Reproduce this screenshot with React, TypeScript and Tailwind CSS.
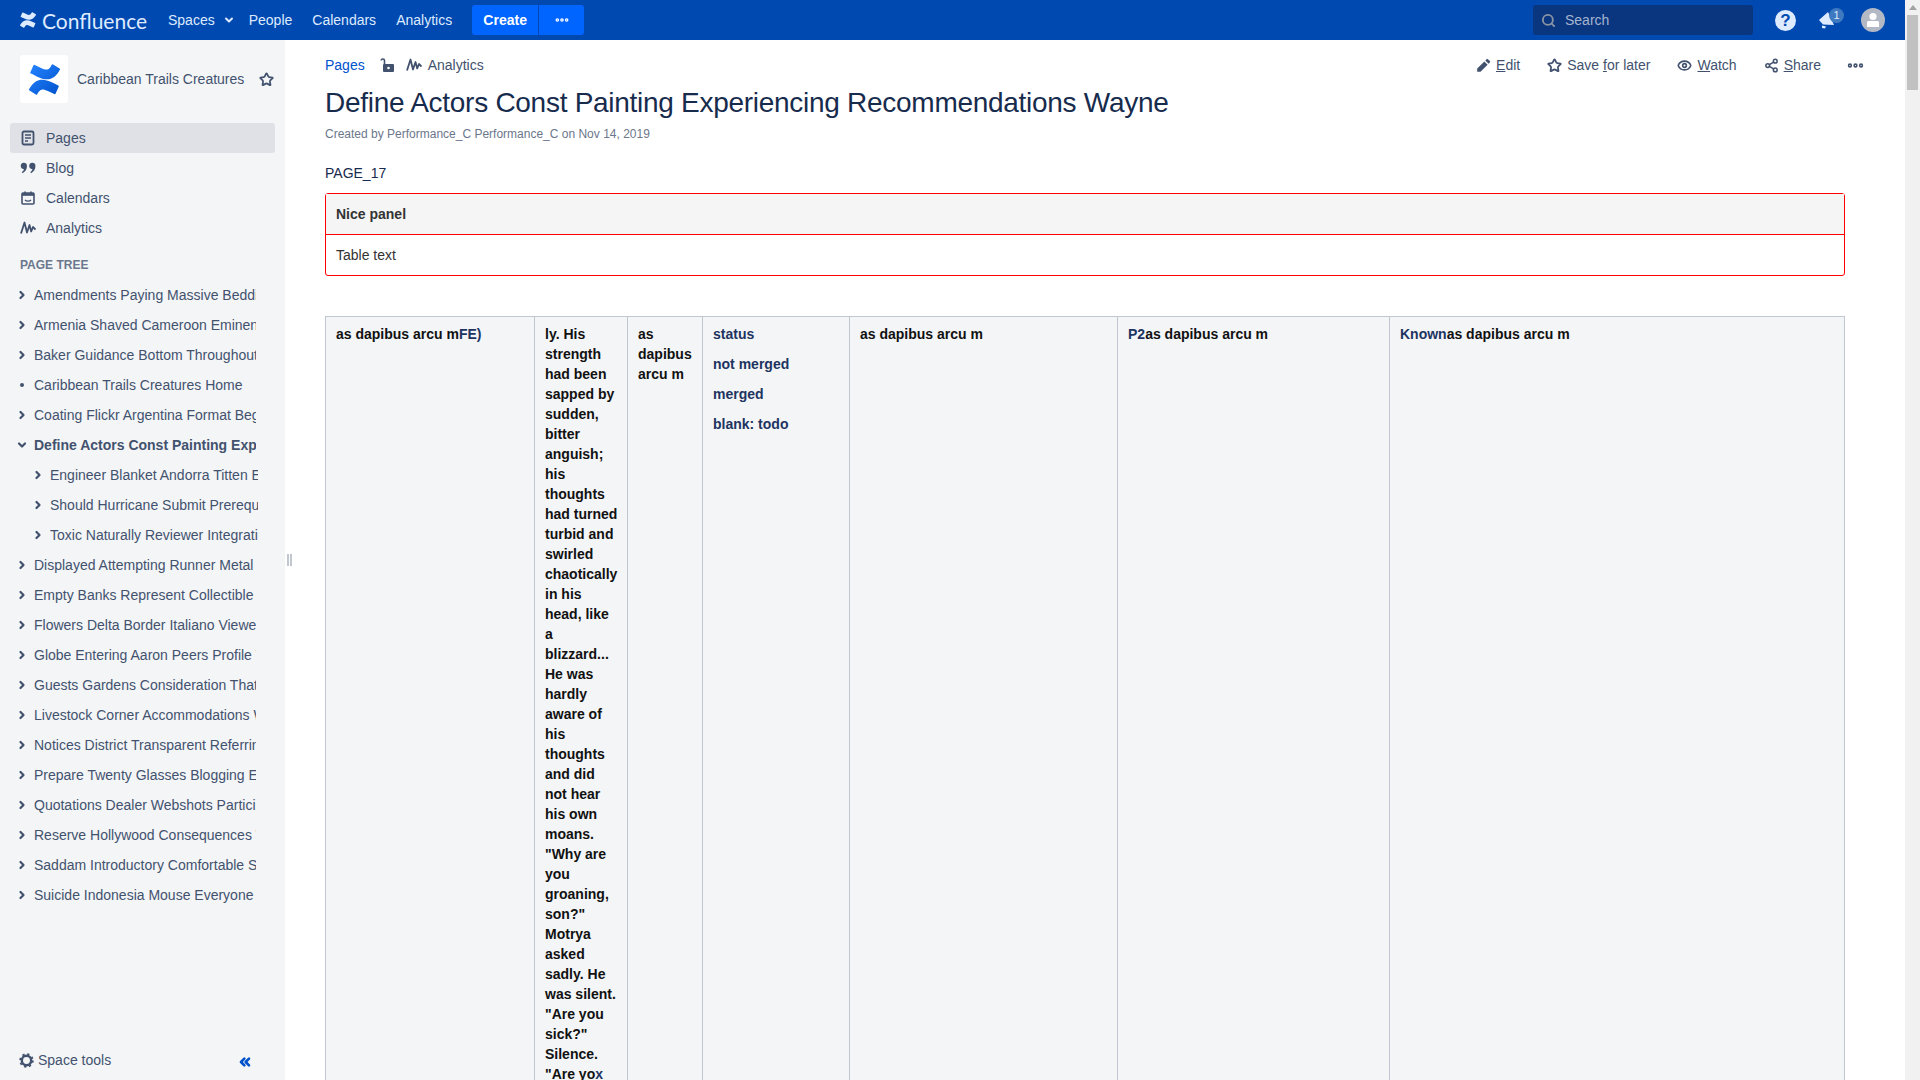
import { ChevronDown, ChevronRight, ChevronsLeft, Eye, MoreHorizontal, Search, Share2, Star } from "lucide-react";
import type { ReactNode } from "react";

const LOGO_PATH =
  "M.87 18.257c-.248.382-.53.875-.763 1.245a.764.764 0 0 0 .255 1.04l4.965 3.054a.764.764 0 0 0 1.058-.26c.199-.332.454-.763.733-1.221 1.967-3.247 3.945-2.853 7.508-1.146l4.957 2.337a.764.764 0 0 0 1.028-.382l2.364-5.346a.764.764 0 0 0-.382-1 599.851 599.851 0 0 1-4.965-2.361C10.911 10.97 5.224 11.185.87 18.257zM23.131 5.743c.249-.405.531-.875.764-1.25a.764.764 0 0 0-.256-1.034L18.675.404a.764.764 0 0 0-1.058.26c-.195.335-.451.763-.734 1.225-1.966 3.246-3.945 2.85-7.508 1.146L4.437.7a.764.764 0 0 0-1.027.382L1.046 6.428a.764.764 0 0 0 .382 1c1.039.49 3.105 1.467 4.965 2.361 6.698 3.246 12.384 3.029 16.738-4.046z";

const treeItems = [
  { label: "Amendments Paying Massive Bedding Wayne" },
  { label: "Armenia Shaved Cameroon Eminent Wayne" },
  { label: "Baker Guidance Bottom Throughout Wayne" },
  { label: "Caribbean Trails Creatures Home", leaf: true },
  { label: "Coating Flickr Argentina Format Begin Wayne" },
  { label: "Define Actors Const Painting Experiencing", open: true },
  { label: "Engineer Blanket Andorra Titten Experience", child: true },
  { label: "Should Hurricane Submit Prerequisite", child: true },
  { label: "Toxic Naturally Reviewer Integration", child: true },
  { label: "Displayed Attempting Runner Metal Wayne" },
  { label: "Empty Banks Represent Collectible Wayne" },
  { label: "Flowers Delta Border Italiano Viewer Wayne" },
  { label: "Globe Entering Aaron Peers Profile Wayne" },
  { label: "Guests Gardens Consideration That Wayne" },
  { label: "Livestock Corner Accommodations Wayne" },
  { label: "Notices District Transparent Referring" },
  { label: "Prepare Twenty Glasses Blogging Event" },
  { label: "Quotations Dealer Webshots Participate" },
  { label: "Reserve Hollywood Consequences Wayne" },
  { label: "Saddam Introductory Comfortable Search" },
  { label: "Suicide Indonesia Mouse Everyone Wayne" },
];

function ConfluenceLogo({ className, gradient }: { className: string; gradient?: boolean }) {
  return (
    <svg viewBox="0 0 24 24" className={className} fill={gradient ? "url(#logoBlue)" : "currentColor"}>
      {gradient && (
        <defs>
          <linearGradient id="logoBlue" x1="0" y1="0" x2="1" y2="1">
            <stop offset="0" stopColor="#2684FF" />
            <stop offset="1" stopColor="#0052CC" />
          </linearGradient>
        </defs>
      )}
      <path d={LOGO_PATH} />
    </svg>
  );
}

function PagesIcon() {
  return (
    <svg viewBox="0 0 16 16" className="h-4 w-4" fill="none" stroke="#42526E">
      <rect x="2.5" y="1.5" width="11" height="13" rx="1.5" strokeWidth="1.8" />
      <path d="M5 5h6M5 8h6M5 11h3" strokeWidth="1.5" />
    </svg>
  );
}

function BlogIcon() {
  return (
    <svg viewBox="0 0 17 16" className="h-4 w-[17px]" fill="#42526E">
      <path d="M4 2.500a3.400 3.400 0 0 1 3.400 3.400c0 3.500-1.600 6-4.600 7.600l-.9-1.200c1.300-.9 2.100-1.900 2.400-3.100A3.350 3.350 0 1 1 4 2.500z" />
      <path d="M13 2.500a3.400 3.400 0 0 1 3.400 3.400c0 3.500-1.600 6-4.600 7.600l-.9-1.200c1.300-.9 2.100-1.900 2.400-3.100A3.350 3.350 0 1 1 13 2.500z" />
    </svg>
  );
}

function CalendarIcon() {
  return (
    <svg viewBox="0 0 16 16" className="h-4 w-4" fill="none" stroke="#42526E">
      <rect x="2" y="3" width="12" height="11" rx="1" strokeWidth="1.6" />
      <path d="M2 4.500h12" strokeWidth="2.600" />
      <path d="M5 1.500v2M11 1.500v2" strokeWidth="1.600" />
      <path d="M5 10c1.500 1.500 4.500 1.500 6 0" strokeWidth="1.400" />
    </svg>
  );
}

function AnalyticsIcon() {
  return (
    <svg viewBox="0 0 16 16" className="h-4 w-4 shrink-0" fill="none" stroke="#42526E" strokeWidth="1.800" strokeLinejoin="round">
      <path d="M1 13.500 4.500 2.500 7 12.500 9.500 5l1.700 6.500L13 7l2.500 2.500" />
    </svg>
  );
}

function LockIcon() {
  return (
    <svg viewBox="0 0 16 16" className="h-4 w-4" fill="#42526E">
      <rect x="3" y="7" width="11" height="8" rx="1" />
      <circle cx="8.500" cy="11" r="1.300" fill="#fff" />
      <path d="M4.500 7V3.600C4.500 2.500 3.700 2 2.800 2S1.200 2.500 1.200 3.400" fill="none" stroke="#42526E" strokeWidth="1.600" />
    </svg>
  );
}

function PencilIcon() {
  return (
    <svg viewBox="0 0 16 16" className="h-[15px] w-[15px]" fill="#42526E">
      <path d="M11.300 1.200a1 1 0 0 1 1.400 0l2.100 2.100a1 1 0 0 1 0 1.400l-1.400 1.400-3.500-3.500zM8.900 3.600l3.500 3.500-7.600 7.600H1.300v-3.500z" />
    </svg>
  );
}

function GearIcon() {
  return (
    <svg viewBox="0 0 16 16" className="h-[15px] w-[15px]" fill="none" stroke="#42526E">
      <circle cx="8" cy="8" r="5" strokeWidth="2.600" />
      <circle cx="8" cy="8" r="6.800" strokeWidth="1.800" strokeDasharray="2.400 2.940" />
    </svg>
  );
}

function MegaphoneIcon() {
  return (
    <svg viewBox="0 0 20 20" className="h-5 w-5" fill="#DEEBFF">
      <path d="M3 10 12 2l6 13-11-.500z" />
      <path d="M6 15.500l4 1-1 2-3-.500z" />
    </svg>
  );
}

function AvatarIcon() {
  return (
    <svg viewBox="0 0 24 24" className="h-6 w-6">
      <circle cx="12" cy="12" r="12" fill="#B3B9C4" />
      <circle cx="12" cy="8.500" r="3.600" fill="#fff" />
      <path d="M6 14.500c0-.8.700-1.500 1.500-1.500h9c.8 0 1.500.7 1.500 1.500V19H6z" fill="#fff" />
    </svg>
  );
}

function HelpIcon() {
  return (
    <div className="flex h-[21px] w-[21px] items-center justify-center rounded-full bg-[#DEEBFF] text-[17px] leading-none font-bold text-[#0049B0]">
      ?
    </div>
  );
}

function SideLink({ icon, label, active }: { icon: ReactNode; label: string; active?: boolean }) {
  return (
    <div className={`mx-[10px] flex h-[30px] items-center gap-[10px] rounded-[3px] pl-[10px] text-[14px] text-[#42526E] ${active ? "bg-[#DFE1E6]" : ""}`}>
      <span className="flex w-[16px] items-center justify-center">{icon}</span>
      {label}
    </div>
  );
}

function TreeRow({ label, leaf, open, child }: { label: string; leaf?: boolean; open?: boolean; child?: boolean }) {
  return (
    <div className={`flex h-[30px] items-center text-[14px] text-[#42526E] ${child ? "pl-[32px]" : "pl-[16px]"} ${open ? "font-bold" : ""}`}>
      <span className="flex w-[12px] items-center justify-center">
        {leaf ? (
          <span className="h-[4px] w-[4px] rounded-full bg-[#42526E]" />
        ) : open ? (
          <ChevronDown size={12} strokeWidth={4.5} />
        ) : (
          <ChevronRight size={12} strokeWidth={4.5} />
        )}
      </span>
      <span className={`ml-[6px] overflow-hidden whitespace-nowrap ${child ? "w-[208px]" : "w-[222px]"}`}>{label}</span>
    </div>
  );
}

function PageAction({ icon, children }: { icon: ReactNode; children: ReactNode }) {
  return (
    <span className="flex items-center gap-[5px] text-[14px] text-[#42526E]">
      <span className="flex w-[15px] items-center justify-center">{icon}</span>
      <span>{children}</span>
    </span>
  );
}

function TopBar() {
  return (
    <header className="flex h-[40px] shrink-0 items-center bg-[#0049B0] pl-[20px] text-[14px] text-[#DEEBFF]">
      <ConfluenceLogo className="h-[16px] w-[16px] text-[#DEEBFF]" />
      <span className="ml-[6px] w-[109px] font-['Lato',sans-serif] text-[21px] leading-none font-normal">Confluence</span>
      <span className="ml-[17px] flex items-center gap-[8px]">
        Spaces <ChevronDown size={12} strokeWidth={4} />
      </span>
      <span className="ml-[14px]">People</span>
      <span className="ml-[20px]">Calendars</span>
      <span className="ml-[20px]">Analytics</span>
      <div className="ml-[20px] flex h-[30px] gap-[1px] text-white">
        <span className="flex w-[66px] items-center justify-center rounded-l-[3px] bg-[#0065FF] font-bold">Create</span>
        <span className="flex w-[45px] items-center justify-center rounded-r-[3px] bg-[#0065FF]">
          <MoreHorizontal size={16} strokeWidth={3.5} />
        </span>
      </div>
      <div className="ml-auto flex h-[30px] w-[220px] items-center rounded-[3px] bg-[#09367F] pl-[8px] text-[#A5B4CF]">
        <Search size={15} strokeWidth={3} className="text-[#8993A4]" />
        <span className="ml-[9px]">Search</span>
      </div>
      <div className="ml-[22px] flex w-[21px] justify-center">
        <HelpIcon />
      </div>
      <div className="relative ml-[20px] flex w-[20px] justify-center">
        <MegaphoneIcon />
        <span className="absolute top-[-2px] right-[-8px] flex h-[15px] w-[15px] items-center justify-center rounded-full bg-[#3F7AC0] text-[11px] text-[#DEEBFF]">1</span>
      </div>
      <div className="mr-[20px] ml-[25px]">
        <AvatarIcon />
      </div>
    </header>
  );
}

function Sidebar() {
  return (
    <aside className="relative flex w-[285px] shrink-0 flex-col bg-[#F4F5F7]">
      <div className="flex items-center pt-[15px] pl-[20px]">
        <div className="flex h-[48px] w-[48px] items-center justify-center rounded-[3px] bg-white">
          <ConfluenceLogo className="h-[31px] w-[31px]" gradient />
        </div>
        <span className="ml-[9px] text-[14px] text-[#42526E]">Caribbean Trails Creatures</span>
        <Star size={15} strokeWidth={2.8} className="ml-[15px] text-[#42526E]" />
      </div>
      <nav className="mt-[20px]">
        <SideLink icon={<PagesIcon />} label="Pages" active />
        <SideLink icon={<BlogIcon />} label="Blog" />
        <SideLink icon={<CalendarIcon />} label="Calendars" />
        <SideLink icon={<AnalyticsIcon />} label="Analytics" />
      </nav>
      <div className="mt-[14px] pl-[20px] text-[12px] leading-[16px] font-bold text-[#6B778C]">PAGE TREE</div>
      <div className="mt-[7px]">
        {treeItems.map((item) => (
          <TreeRow key={item.label} {...item} />
        ))}
      </div>
      <div className="mt-auto flex h-[40px] items-center pr-[32px] pl-[19px] text-[14px] text-[#42526E]">
        <GearIcon />
        <span className="ml-[4px]">Space tools</span>
        <ChevronsLeft size={16} strokeWidth={4} className="mt-[4px] ml-auto text-[#0052CC]" />
      </div>
      {/* resize grip */}
      <div className="absolute top-[514px] right-[-7px] flex gap-[1px]">
        <span className="h-[12px] w-[2px] bg-[#C1C7D0]" />
        <span className="h-[12px] w-[2px] bg-[#C1C7D0]" />
      </div>
    </aside>
  );
}

function Cell({ children, tight }: { children: ReactNode; tight?: boolean }) {
  return (
    <td className={`border border-[#C1C7D0] bg-[#F4F5F7] py-[7px] pl-[10px] align-top text-[14px] leading-[20px] font-bold text-[#111] ${tight ? "pr-[7px]" : "pr-[10px]"}`}>
      {children}
    </td>
  );
}

function Content() {
  return (
    <main className="min-w-0 flex-1 overflow-hidden pt-[15px] pr-[60px] pl-[40px]">
      <div className="flex h-[20px] items-center text-[14px]">
        <span className="text-[#0052CC]">Pages</span>
        <span className="ml-[15px]">
          <LockIcon />
        </span>
        <span className="ml-[10px] flex items-center gap-[6px] text-[#42526E]">
          <AnalyticsIcon /> Analytics
        </span>
        <div className="-mr-[20px] ml-auto flex items-center">
          <PageAction icon={<PencilIcon />}>
            <u>E</u>dit
          </PageAction>
          <span className="ml-[27px]">
            <PageAction icon={<Star size={15} strokeWidth={2.8} />}>
              Save <u>f</u>or later
            </PageAction>
          </span>
          <span className="ml-[27px]">
            <PageAction icon={<Eye size={15} strokeWidth={2.6} />}>
              <u>W</u>atch
            </PageAction>
          </span>
          <span className="ml-[27px]">
            <PageAction icon={<Share2 size={17} strokeWidth={2.4} />}>
              <u>S</u>hare
            </PageAction>
          </span>
          <MoreHorizontal size={19} strokeWidth={3.5} className="ml-[25px] text-[#42526E]" />
        </div>
      </div>
      <h1 className="mt-[12px] text-[28px] leading-[32px] font-normal tracking-[-0.01em] text-[#172B4D]">Define Actors Const Painting Experiencing Recommendations Wayne</h1>
      <p className="mt-[7px] text-[12px] leading-[16px] text-[#6B778C]">Created by Performance_C Performance_C on Nov 14, 2019</p>
      <p className="mt-[21px] text-[14px] leading-[20px] text-[#172B4D]">PAGE_17</p>

      <div className="mt-[10px] rounded-[3px] border border-[#FF0000] text-[14px] text-[#333]">
        <div className="flex h-[41px] items-center border-b border-[#FF0000] bg-[#F5F5F5] pl-[10px] font-bold">Nice panel</div>
        <div className="flex h-[40px] items-center pl-[10px]">Table text</div>
      </div>

      <table className="mt-[40px] w-[1519px] table-fixed border-collapse">
        <colgroup>
          <col className="w-[209px]" />
          <col className="w-[93px]" />
          <col className="w-[75px]" />
          <col className="w-[147px]" />
          <col className="w-[268px]" />
          <col className="w-[272px]" />
          <col className="w-[455px]" />
        </colgroup>
        <tbody>
          <tr>
            <Cell>
              as dapibus arcu m<span className="text-[#1D3461]">FE)</span>
            </Cell>
            <Cell tight>
              ly. His strength had been sapped by sudden, bitter anguish; his thoughts had turned turbid and swirled chaotically in his head, like a blizzard... He was hardly aware of his thoughts and did not hear his own moans. "Why are you groaning, son?" Motrya asked sadly. He was silent. "Are you sick?" Silence. "Are yo<span className="text-[#1D3461]">x</span>
            </Cell>
            <Cell>as dapibus arcu m</Cell>
            <Cell>
              <div className="space-y-[10px] text-[#1D3461]">
                <p>status</p>
                <p>not merged</p>
                <p>merged</p>
                <p>blank: todo</p>
              </div>
            </Cell>
            <Cell>as dapibus arcu m</Cell>
            <Cell>
              <span className="text-[#1D3461]">P2</span>as dapibus arcu m
            </Cell>
            <Cell>
              <span className="text-[#1D3461]">Known</span>as dapibus arcu m
            </Cell>
          </tr>
        </tbody>
      </table>
    </main>
  );
}

function ScrollBar() {
  return (
    <div className="flex w-[15px] shrink-0 flex-col items-center bg-[#F1F1F1]">
      <div className="mt-[5px] h-0 w-0 border-x-[4px] border-b-[5px] border-x-transparent border-b-[#A3A3A3]" />
      <div className="mt-[5px] h-[75px] w-[11px] bg-[#C1C1C1]" />
    </div>
  );
}

export default function App() {
  return (
    <div className="flex h-screen w-full overflow-hidden bg-white font-['Liberation_Sans',Arial,sans-serif]">
      <div className="flex min-w-0 flex-1 flex-col">
        <TopBar />
        <div className="flex min-h-0 flex-1">
          <Sidebar />
          <Content />
        </div>
      </div>
      <ScrollBar />
    </div>
  );
}
